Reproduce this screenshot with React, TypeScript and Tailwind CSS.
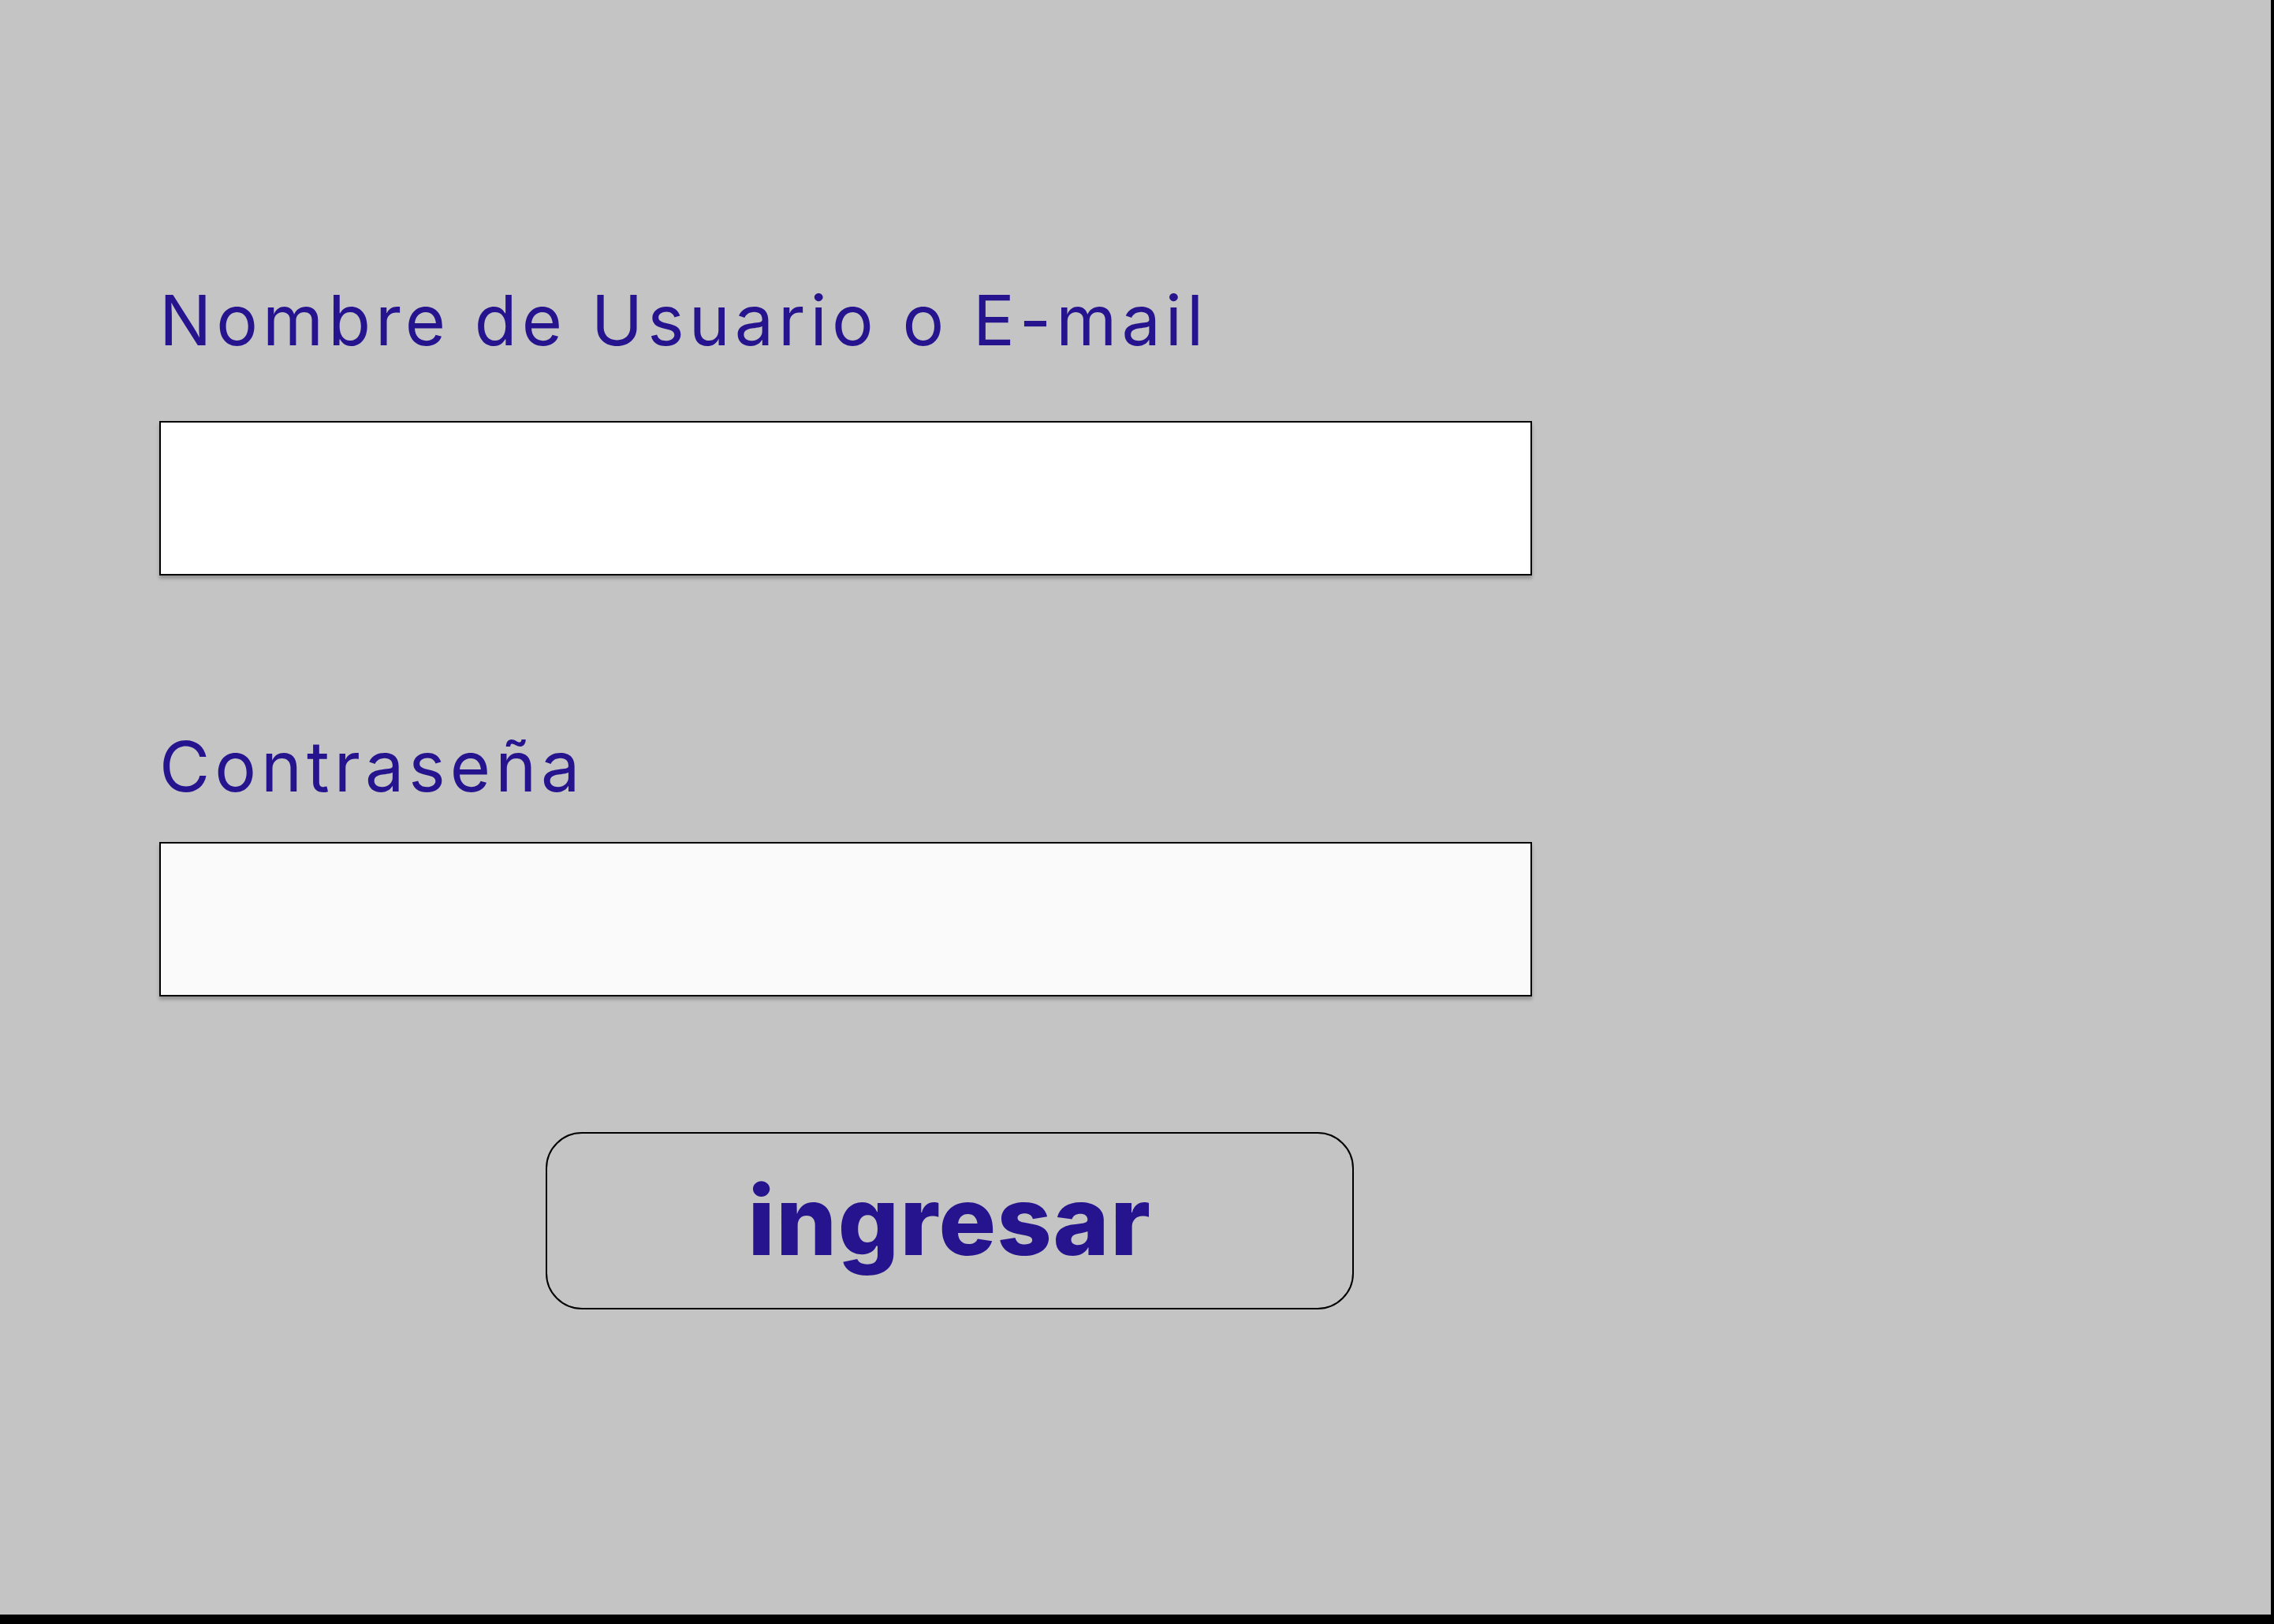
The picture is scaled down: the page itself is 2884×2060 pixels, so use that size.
import React from 'react';

const Field: React.FC<{ label: string; gap: string; bg: string }> = ({ label, gap, bg }) => (
  <div className="flex flex-col">
    <label
      className={`text-[88px] leading-none tracking-[6px] text-[#26148f] ${gap}`}
      style={{ fontFamily: 'Inter, sans-serif' }}
    >
      {label}
    </label>
    <input
      type="text"
      className={`w-[1741px] h-[196px] border-2 border-black outline-none shadow-[0_4px_4px_rgba(0,0,0,0.25)] ${bg}`}
    />
  </div>
);

export default function App() {
  return (
    <div className="w-full h-[2060px] bg-black">
      <div className="w-[2880px] h-[2048px] bg-[#c4c4c4] pl-[202px] pt-[362px] flex flex-col">
        <Field label="Nombre de Usuario o E-mail" gap="mb-[84px]" bg="bg-white" />
        <div className="mt-[198px]">
          <Field label="Contraseña" gap="mb-[52px]" bg="bg-[#fafafa]" />
        </div>
        <button
          className="mt-[172px] ml-[490px] w-[1025px] h-[225px] rounded-[46px] border-2 border-black flex items-center justify-center text-[121px] leading-none tracking-[1.5px] font-extrabold text-[#26148f]"
          style={{ fontFamily: 'Inter, sans-serif' }}
        >
          ingresar
        </button>
      </div>
    </div>
  );
}
